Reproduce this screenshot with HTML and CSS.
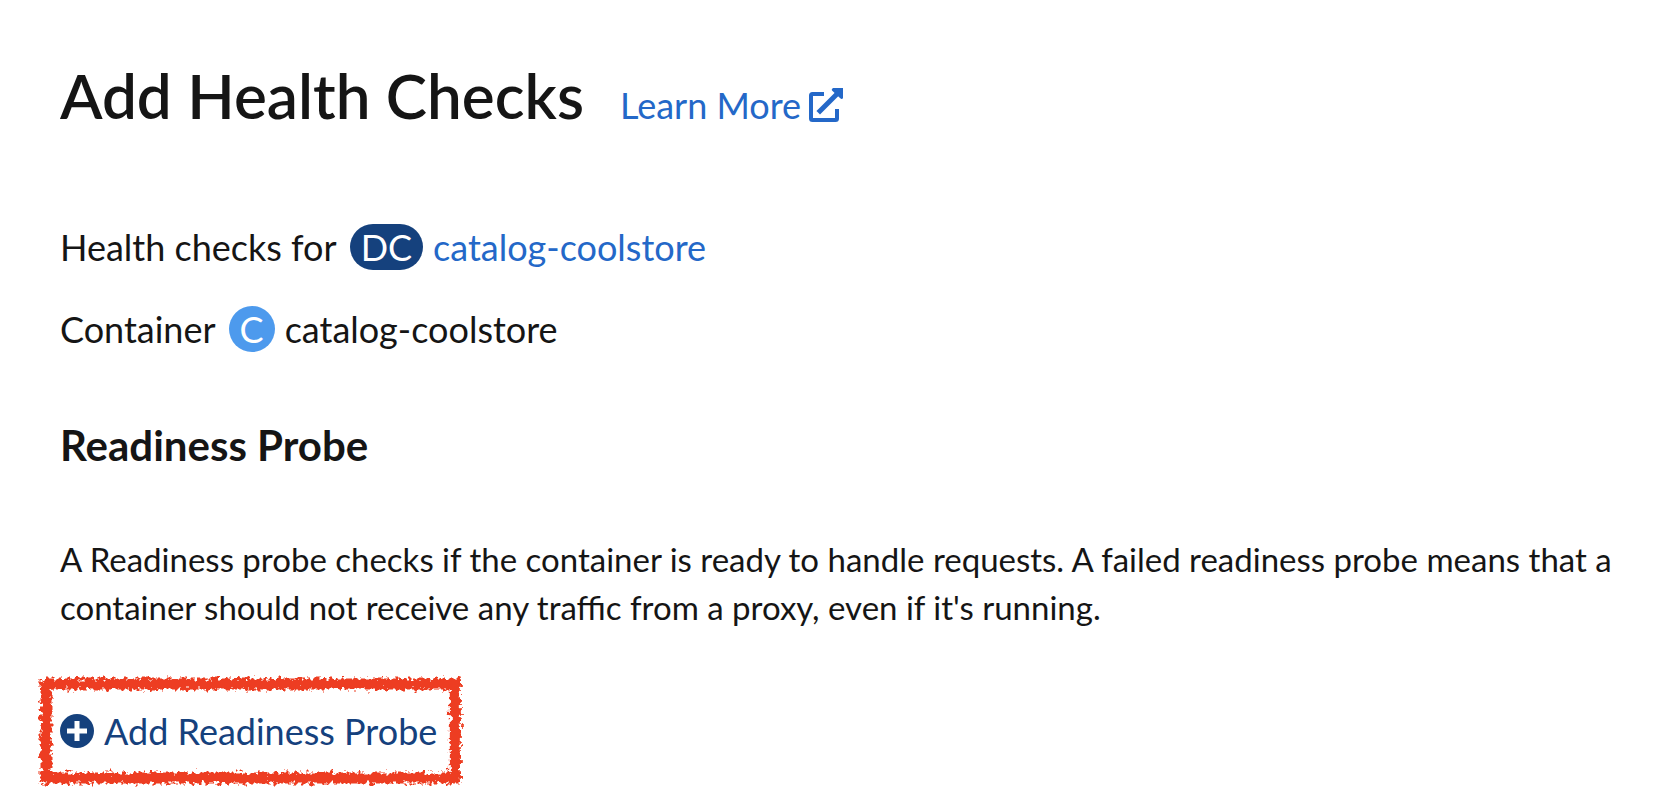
FILE: index.html
```html
<!DOCTYPE html>
<html lang="en">
<head>
<meta charset="utf-8">
<meta name="viewport" content="width=device-width, initial-scale=1">
<title>Add Health Checks</title>
<link rel="stylesheet" href="styles.css">
</head>
<body>
<main class="page">
  <header class="page-header">
    <h1 class="page-title">Add Health Checks</h1>
    <a class="learn-more" href="#learn">Learn More
      <svg class="external-icon" viewBox="0 0 34 34" aria-hidden="true">
        <path d="M15 6H3.500Q2 6 2 7.500V30.500Q2 32 3.500 32H26.500Q28 32 28 30.500V21" fill="none" stroke="currentColor" stroke-width="4"/>
        <path d="M11 23L30 4" fill="none" stroke="currentColor" stroke-width="5" stroke-linecap="square"/>
        <path d="M24 0H34V10Q33 12 31 10L23 2.500Q22 1 24 0Z" fill="currentColor"/>
      </svg>
    </a>
  </header>

  <section class="resources">
    <p class="resource">Health checks for
      <span class="badge badge-dc">DC</span>
      <a class="resource-link" href="#catalog">catalog-coolstore</a>
    </p>
    <p class="resource">Container
      <span class="badge badge-c">C</span>
      <span>catalog-coolstore</span>
    </p>
  </section>

  <section class="probe">
    <h2 class="probe-title">Readiness Probe</h2>
    <p class="probe-text">A Readiness probe checks if the container is ready to handle requests. A failed readiness probe means that a container should not receive any traffic from a proxy, even if it's running.</p>
    <button class="add-probe" type="button">
      <svg class="plus-icon" viewBox="0 0 34 34" aria-hidden="true">
        <circle cx="17" cy="17" r="17" fill="currentColor"/>
        <path d="M17 7V27M7 17H27" stroke="#fff" stroke-width="5"/>
      </svg>
      Add Readiness Probe
      <svg class="crayon" aria-hidden="true">
        <defs>
          <filter id="rough" x="-10%" y="-25%" width="120%" height="150%">
            <feTurbulence type="fractalNoise" baseFrequency="0.25" numOctaves="3" seed="7" result="noise"/>
            <feDisplacementMap in="SourceGraphic" in2="noise" scale="11" xChannelSelector="R" yChannelSelector="G"/>
          </filter>
        </defs>
        <g filter="url(#rough)">
          <rect class="crayon-line" width="100%" height="100%"/>
        </g>
      </svg>
    </button>
  </section>
</main>
</body>
</html>
```
FILE: styles.css
```css
* {
  box-sizing: border-box;
}

body {
  margin: 0;
  background: #fff;
  color: #151515;
  font-family: Lato, "Liberation Sans", sans-serif;
  font-size: 36px;
  line-height: 48px;
}

h1, h2, p {
  margin: 0;
}

a {
  color: #2468c8;
  text-decoration: none;
}

.page {
  min-height: 100vh;
  padding: 57px 48px 48px 60px;
}

.page-header {
  display: flex;
  align-items: baseline;
  gap: 36px;
}

.page-title {
  font-size: 62px;
  font-weight: 600;
  line-height: 76px;
}

.learn-more {
  display: flex;
  align-items: center;
  gap: 8px;
}

.external-icon {
  width: 34px;
  height: 34px;
}

.resources {
  display: grid;
  gap: 34px;
  margin-top: 90px;
}

.resource {
  display: flex;
  align-items: center;
  gap: 10px;
}

.badge {
  min-width: 46px;
  margin-left: 3px;
  padding: 0 11px;
  border-radius: 23px;
  color: #fff;
  line-height: 46px;
  text-align: center;
}

.badge-dc {
  background: #15417d;
}

.badge-c {
  background: #4d9aed;
}

.probe {
  margin-top: 68px;
}

.probe-title {
  font-size: 42px;
  font-weight: 700;
}

.probe-text {
  margin-top: 66px;
  font-size: 33px;
}

.add-probe {
  position: relative;
  display: flex;
  align-items: center;
  gap: 10px;
  margin-top: 76px;
  padding: 0;
  border: 0;
  background: none;
  color: #15417d;
  font: inherit;
  cursor: pointer;
}

.plus-icon {
  width: 34px;
  height: 34px;
}

.crayon {
  position: absolute;
  top: -23px;
  left: -14px;
  width: calc(100% + 32px);
  height: calc(100% + 46px);
  overflow: visible;
  pointer-events: none;
}

.crayon-line {
  fill: none;
  stroke: #ed3e23;
  stroke-width: 11px;
}
```
